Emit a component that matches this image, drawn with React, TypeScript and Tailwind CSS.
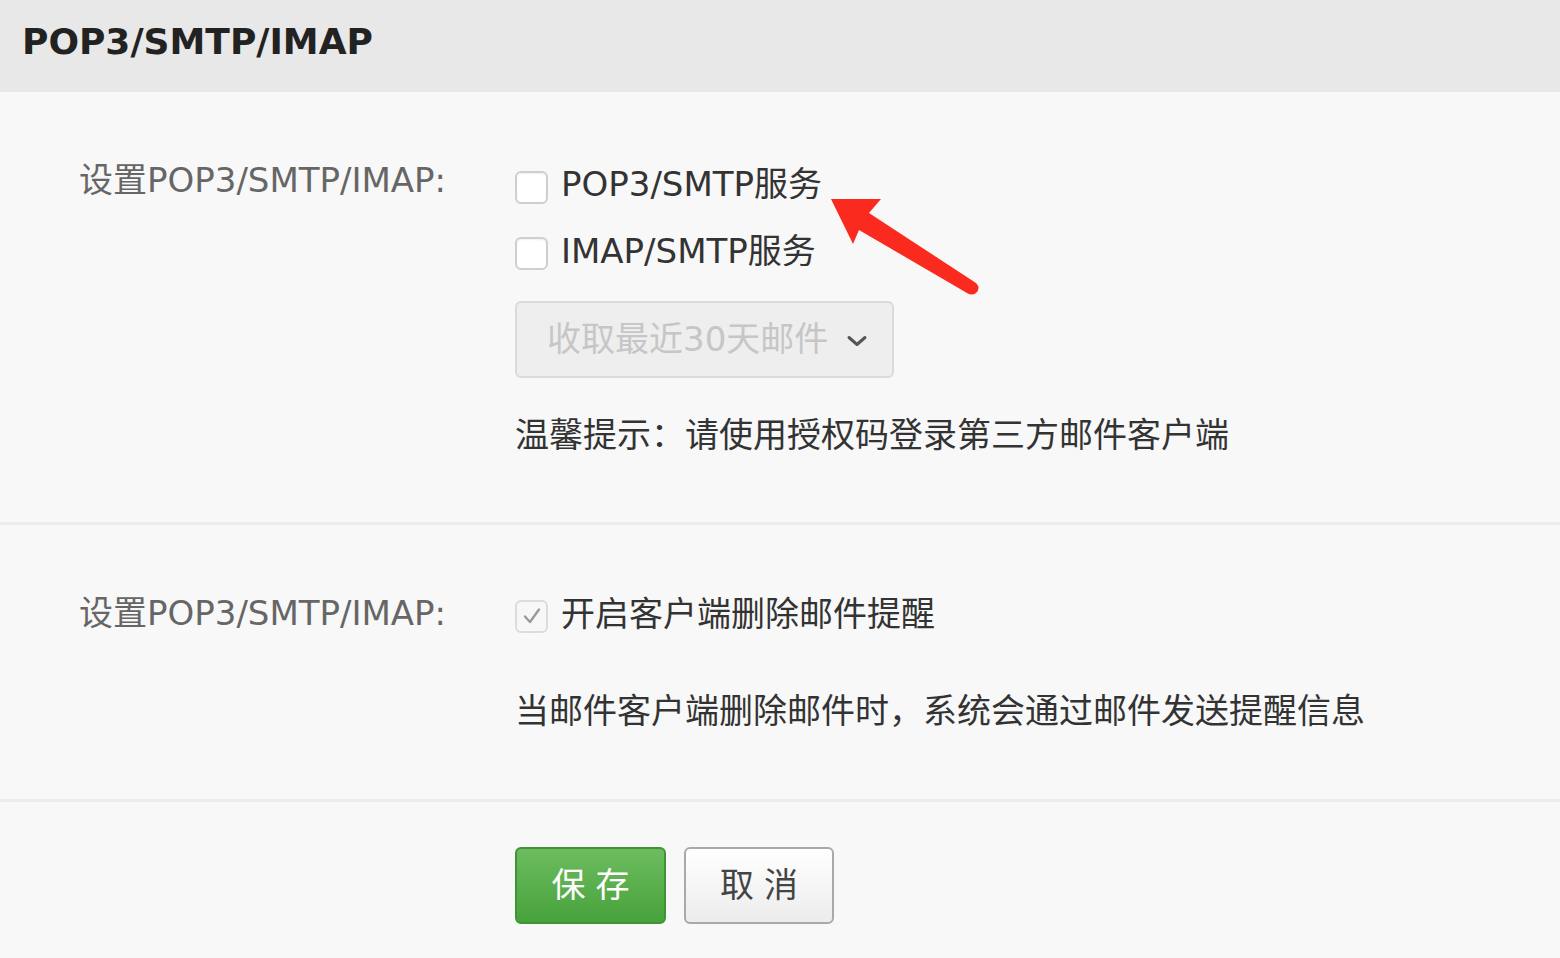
import React from "react";

function Box({ checked }: { checked?: boolean }) {
  if (checked) {
    return (
      <div className="w-[33px] h-[33px] shrink-0 rounded-[6px] border-2 border-[#dcdcdc] bg-[#f7f7f7] flex items-center justify-center">
        <svg width="22" height="22" viewBox="0 0 22 22" fill="none">
          <path d="M4 11.5 L9 17 L18 4.5" stroke="#9a9a9a" strokeWidth="2.4" strokeLinecap="round" strokeLinejoin="round" />
        </svg>
      </div>
    );
  }
  return <div className="w-[33px] h-[33px] shrink-0 rounded-[6px] border-2 border-[#cfcfcf] bg-white shadow-[inset_0_1px_2px_rgba(0,0,0,0.06)]" />;
}

export default function App() {
  return (
    <div className="relative w-[1560px] h-[958px] overflow-hidden bg-[#f8f8f8] font-['DejaVu_Sans','Noto_Sans_CJK_SC',sans-serif] text-[#333]">
      {/* header */}
      <div className="h-[92px] bg-[#e8e8e8] flex items-center pl-[22px]">
        <h1 className="text-[36px] font-bold text-[#222] leading-none -mt-[8px]">POP3/SMTP/IMAP</h1>
      </div>

      {/* section 1 */}
      <div className="flex pt-[62px] pb-[62px]">
        <div className="w-[515px] shrink-0 pl-[79px] text-[34px] leading-[52px] text-[#666]">设置POP3/SMTP/IMAP:</div>
        <div className="flex flex-col">
          <div className="h-[66px] flex items-center gap-[13px] text-[34px]">
            <Box />
            <span className="-mt-[6px]">POP3/SMTP服务</span>
          </div>
          <div className="h-[66px] flex items-center gap-[13px] text-[34px]">
            <Box />
            <span className="-mt-[4px]">IMAP/SMTP服务</span>
          </div>
          <div className="mt-[15px] w-[379px] h-[77px] rounded-[6px] border-2 border-[#dadada] bg-[#eeeeee] flex items-center pl-[30px] text-[34px] text-[#c6c6c6]">
            <span>收取最近30天邮件</span>
            <svg className="ml-[18px] mt-[2px]" width="22" height="14" viewBox="0 0 22 14" fill="none">
              <path d="M3 3.5 L11 10.5 L19 3.5" stroke="#555" strokeWidth="3" strokeLinecap="round" strokeLinejoin="round" />
            </svg>
          </div>
          <div className="mt-[32px] h-[50px] leading-[50px] text-[34px]">温馨提示：请使用授权码登录第三方邮件客户端</div>
        </div>
      </div>

      <div className="h-[3px] bg-[#ececec]" />

      {/* section 2 */}
      <div className="flex pt-[58px] pb-[63px]">
        <div className="w-[515px] shrink-0 pl-[79px] text-[34px] leading-[60px] text-[#666]">设置POP3/SMTP/IMAP:</div>
        <div className="flex flex-col">
          <div className="h-[66px] flex items-center gap-[13px] text-[34px]">
            <Box checked />
            <span className="-mt-[3px]">开启客户端删除邮件提醒</span>
          </div>
          <div className="mt-[37px] h-[50px] leading-[50px] text-[34px]">当邮件客户端删除邮件时，系统会通过邮件发送提醒信息</div>
        </div>
      </div>

      <div className="h-[3px] bg-[#ececec]" />

      {/* buttons */}
      <div className="flex gap-[18px] pl-[515px] pt-[45px]">
        <button className="w-[151px] h-[77px] rounded-[6px] border-2 border-[#3f9532] bg-gradient-to-b from-[#6cbc5f] to-[#47a23b] text-white text-[34px] tracking-[10px] pl-[10px]">保存</button>
        <button className="w-[150px] h-[77px] rounded-[6px] border-2 border-[#a9a9a9] bg-gradient-to-b from-[#ffffff] to-[#ececec] text-[#444] text-[34px] tracking-[10px] pl-[10px]">取消</button>
      </div>

      {/* red arrow annotation */}
      <svg className="absolute left-0 top-0 pointer-events-none" width="1560" height="958" viewBox="0 0 1560 958">
        <path
          d="M831 199 L881 199 L869 213 L976 283 Q981 288 976 293 Q972 296 967 293 L859 230 L853 244 Z"
          fill="#fb2a1f"
          strokeLinejoin="round"
        />
      </svg>
    </div>
  );
}
